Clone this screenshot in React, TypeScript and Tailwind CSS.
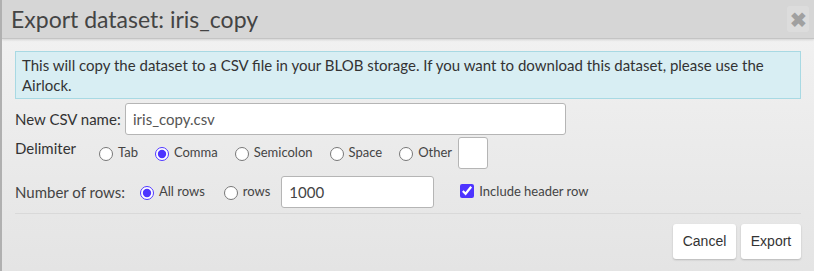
import { useState } from "react"

const font = { fontFamily: "Lato, 'Noto Sans', sans-serif" }

type RadioProps = {
  readonly label: string
  readonly checked: boolean
  readonly onChange: () => void
}

const Radio = ({ label, checked, onChange }: RadioProps) => (
  <label className="flex items-center gap-[5px] text-[13px] text-[#444]">
    <input type="radio" checked={checked} onChange={onChange} className="m-0 mt-[2px] h-[14px] w-[14px] accent-[#4d34ff]" />
    <span>{label}</span>
  </label>
)

export default function App() {
  const [delimiter, setDelimiter] = useState("Comma")
  const [allRows, setAllRows] = useState(true)
  const [header, setHeader] = useState(true)

  return (
    <div className="h-[271px] w-[814px] overflow-hidden border-l-2 border-[#b0b0b0] bg-gradient-to-b from-[#f3f3f3] to-[#e4e4e4]" style={font}>
      <div className="flex h-[39px] items-center justify-between border-b border-[#c4c4c4] bg-[#d6d6d6] pr-[5px] pl-[9px] shadow-[0_1px_2px_rgba(0,0,0,0.12)]">
        <h1 className="text-[23px] leading-none text-[#444]">Export dataset: iris_copy</h1>
        <button type="button" className="flex h-[26px] w-[22px] items-center justify-center rounded-[3px] bg-[#dcdcdc] text-[20px] font-bold leading-none text-[#a0a0a0]">
          ✖
        </button>
      </div>

      <div className="px-[13px] pt-[12px]">
        <div className="border border-[#a8d9e3] bg-[#d8eef3] px-[6px] py-[3px] text-[15px] leading-[20px] text-[#333]">
          This will copy the dataset to a CSV file in your BLOB storage. If you want to download this dataset, please use the Airlock.
        </div>

        <div className="mt-[4px] flex items-center">
          <span className="w-[110px] text-[15px] text-[#333]">New CSV name:</span>
          <input
            defaultValue="iris_copy.csv"
            className="h-[32px] w-[441px] rounded-[3px] border border-[#b5b5b5] bg-white px-[7px] text-[15px] text-[#555] outline-none"
          />
        </div>

        <div className="mt-[2px] flex items-center">
          <span className="-mt-[10px] w-[84px] text-[15px] text-[#333]">Delimiter</span>
          <div className="flex items-center gap-[17px]">
            {["Tab", "Comma", "Semicolon", "Space", "Other"].map((d) => (
              <Radio key={d} label={d} checked={delimiter === d} onChange={() => setDelimiter(d)} />
            ))}
          </div>
          <input className="ml-[6px] h-[32px] w-[30px] rounded-[3px] border border-[#b5b5b5] bg-white outline-none" />
        </div>

        <div className="mt-[7px] flex items-center">
          <span className="w-[125px] text-[15px] text-[#444]">Number of rows:</span>
          <div className="flex items-center gap-[19px]">
            <Radio label="All rows" checked={allRows} onChange={() => setAllRows(true)} />
            <Radio label="rows" checked={!allRows} onChange={() => setAllRows(false)} />
          </div>
          <input
            defaultValue="1000"
            className="ml-[11px] h-[32px] w-[153px] rounded-[3px] border border-[#b5b5b5] bg-white px-[7px] text-[15px] text-[#444] outline-none"
          />
          <label className="ml-[26px] flex items-center gap-[5px] text-[13px] text-[#444]">
            <input type="checkbox" checked={header} onChange={() => setHeader(!header)} className="m-0 -mt-[3px] h-[14px] w-[14px] accent-[#4d34ff]" />
            Include header row
          </label>
        </div>

        <div className="mt-[5px] border-t border-[#d9d9d9]" />

        <div className="mt-[10px] flex justify-end gap-[5px]" style={{ fontFamily: "'Liberation Sans', Arial, sans-serif" }}>
          <button type="button" className="h-[35px] w-[63px] rounded-[3px] bg-white text-[14px] text-[#333] shadow-[0_1px_2px_rgba(0,0,0,0.2)]">
            Cancel
          </button>
          <button type="button" className="h-[35px] w-[60px] rounded-[3px] bg-white text-[14px] text-[#333] shadow-[0_1px_2px_rgba(0,0,0,0.2)]">
            Export
          </button>
        </div>
      </div>
    </div>
  )
}
